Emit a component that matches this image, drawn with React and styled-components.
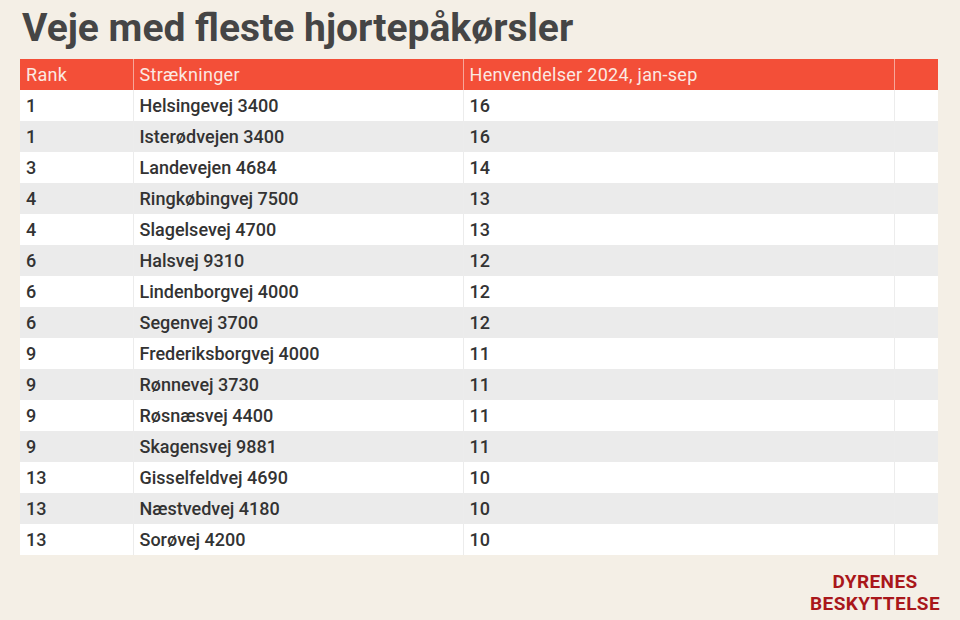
import React from 'react'
import styled, { createGlobalStyle } from 'styled-components'

const GlobalStyle = createGlobalStyle`
    html, body {
        margin: 0;
        padding: 0;
        background: #f4efe6;
    }
    body {
        font-family: Roboto, "Liberation Sans", sans-serif;
        width: 960px;
        height: 620px;
        overflow: hidden;
    }
`

const Page = styled.div`
    width: 960px;
    height: 620px;
    box-sizing: border-box;
    padding: 0 22px 0 20px;
    display: flex;
    flex-direction: column;
`

const Title = styled.h1`
    margin: 0;
    padding: 5px 0 0 2px;
    height: 59px;
    box-sizing: border-box;
    font-size: 39px;
    line-height: 46px;
    font-weight: 700;
    color: #454545;
`

const Table = styled.table`
    width: 918px;
    border-collapse: collapse;
    table-layout: fixed;
    font-size: 18px;
    font-weight: 500;
    color: #333333;
`

const Head = styled.th`
    background: #f34f38;
    color: #fbe9e2;
    font-weight: 400;
    font-size: 18px;
    letter-spacing: 0.3px;
    text-align: left;
    height: 31px;
    padding: 0 6px;
    border-left: 1px solid #f7a79a;
    &:first-child { border-left: none; }
`

const Row = styled.tr`
    background: ${p => (p.$odd ? '#ebebeb' : '#ffffff')};
`

const Cell = styled.td`
    height: 31px;
    padding: 0 6px;
    border-left: 1px solid #ececec;
    white-space: nowrap;
    &:first-child { border-left: none; }
`

const Footer = styled.div`
    flex: 1;
    display: flex;
    justify-content: flex-end;
    align-items: flex-start;
    padding-top: 16px;
`

const Logo = styled.div`
    color: #a9171b;
    font-weight: 700;
    font-size: 19px;
    line-height: 22px;
    letter-spacing: 0.4px;
    text-align: center;
    margin-right: -2px;
`

const rows = [
    ['1', 'Helsingevej 3400', '16'],
    ['1', 'Isterødvejen 3400', '16'],
    ['3', 'Landevejen 4684', '14'],
    ['4', 'Ringkøbingvej 7500', '13'],
    ['4', 'Slagelsevej 4700', '13'],
    ['6', 'Halsvej 9310', '12'],
    ['6', 'Lindenborgvej 4000', '12'],
    ['6', 'Segenvej 3700', '12'],
    ['9', 'Frederiksborgvej 4000', '11'],
    ['9', 'Rønnevej 3730', '11'],
    ['9', 'Røsnæsvej 4400', '11'],
    ['9', 'Skagensvej 9881', '11'],
    ['13', 'Gisselfeldvej 4690', '10'],
    ['13', 'Næstvedvej 4180', '10'],
    ['13', 'Sorøvej 4200', '10'],
]

export default function App() {
    return (
        <>
            <GlobalStyle />
            <Page>
                <Title>Veje med fleste hjortepåkørsler</Title>
                <Table>
                    <colgroup>
                        <col style={{ width: 113 }} />
                        <col style={{ width: 330 }} />
                        <col style={{ width: 431 }} />
                        <col style={{ width: 44 }} />
                    </colgroup>
                    <thead>
                        <tr>
                            <Head>Rank</Head>
                            <Head>Strækninger</Head>
                            <Head>Henvendelser 2024, jan-sep</Head>
                            <Head></Head>
                        </tr>
                    </thead>
                    <tbody>
                        {rows.map((r, i) => (
                            <Row key={i} $odd={i % 2 === 1}>
                                <Cell>{r[0]}</Cell>
                                <Cell>{r[1]}</Cell>
                                <Cell>{r[2]}</Cell>
                                <Cell></Cell>
                            </Row>
                        ))}
                    </tbody>
                </Table>
                <Footer>
                    <Logo>DYRENES<br />BESKYTTELSE</Logo>
                </Footer>
            </Page>
        </>
    )
}
